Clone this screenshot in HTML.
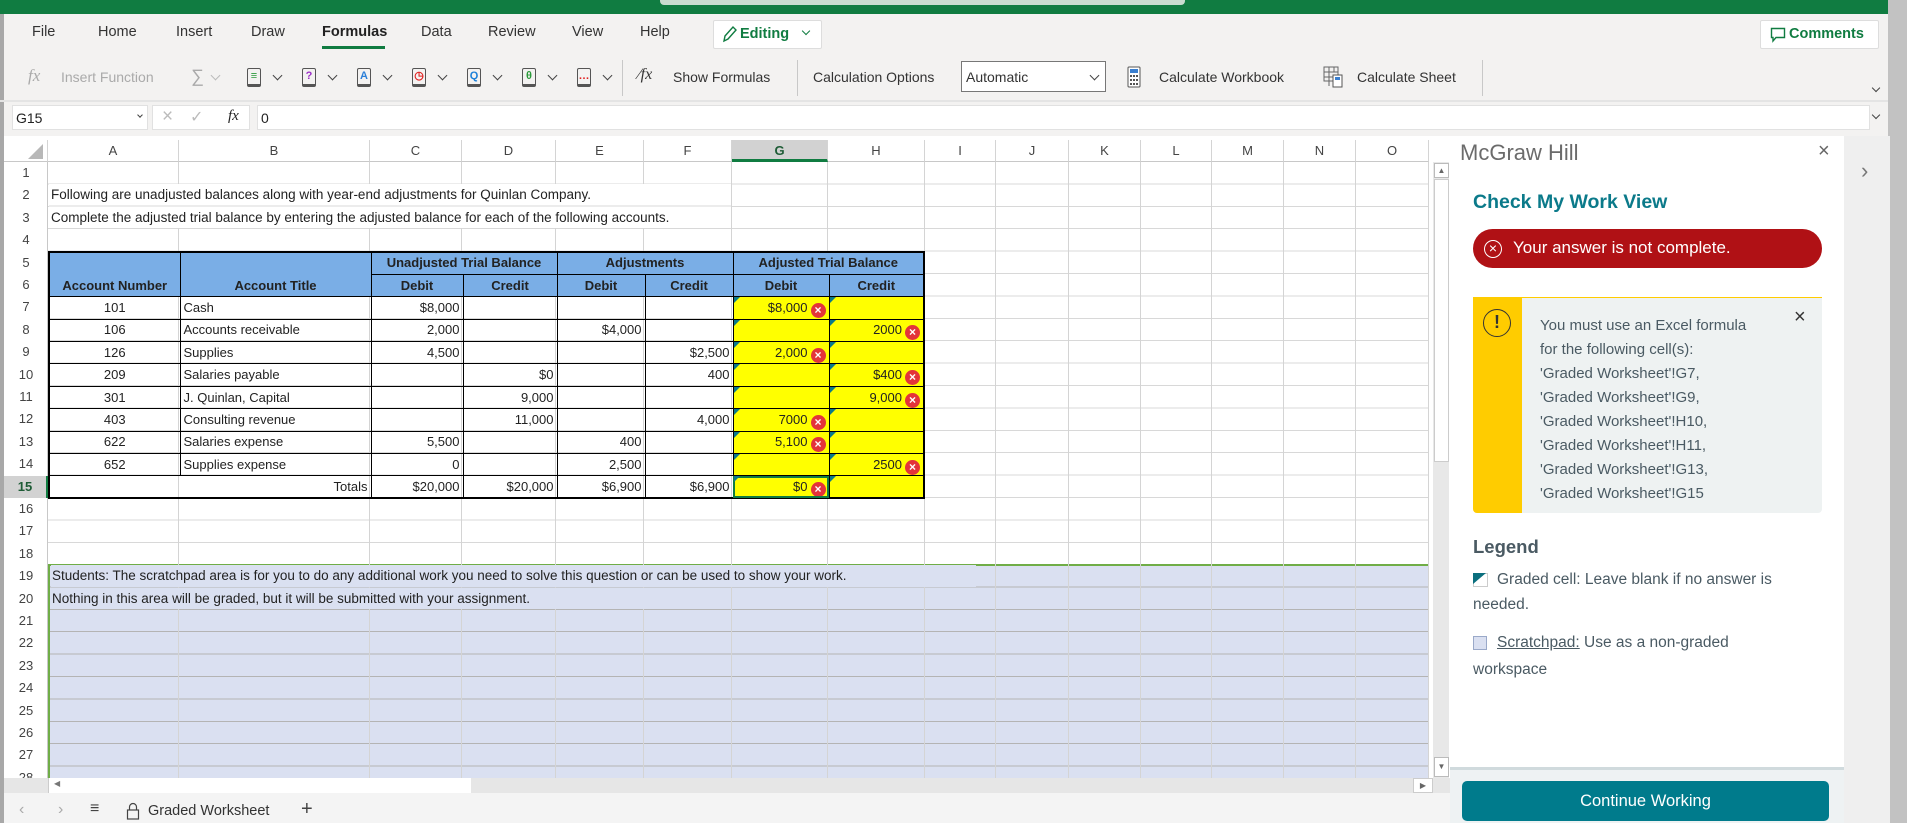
<!DOCTYPE html>
<html><head><meta charset="utf-8"><style>
*{box-sizing:border-box;margin:0;padding:0}
body{width:1907px;height:823px;overflow:hidden;position:relative;background:#fff;font-family:"Liberation Sans",sans-serif;color:#222}
.a{position:absolute}
.tab{position:absolute;top:24px;font-size:14.5px;color:#333}
.rb{position:absolute;top:69px;font-size:14px;color:#333;white-space:nowrap}
.chev{position:absolute;width:7px;height:7px;border-right:1.3px solid #444;border-bottom:1.3px solid #444;transform:rotate(45deg)}
.bk{position:absolute;top:68px;width:14px;height:19px;border:1.3px solid #555;border-radius:2px;border-bottom-width:3px;font-size:11px;text-align:center;line-height:14px;font-weight:bold}
.vl{position:absolute;width:1px;background:#d4d4d4}
.ch{position:absolute;top:140px;height:22px;font-size:13px;color:#444;text-align:center;line-height:22px;border-right:1px solid #d4d4d4;border-bottom:1px solid #c8c8c8;background:#fff}
.rh{position:absolute;left:4px;width:44px;height:22.4px;font-size:13px;color:#444;text-align:center;line-height:22px}
table{border-collapse:collapse;position:absolute;left:48px;top:251px;font-size:13px;table-layout:fixed}
td{height:22.4px;padding:0 3px;border:1px solid #000;white-space:nowrap;position:relative;line-height:20px}
.hd td{background:#7aaee6;font-weight:bold;text-align:center}
.r{text-align:right}.c{text-align:center}
.y{background:#ff0;text-align:right;padding-right:3px}
.y:before{content:"";position:absolute;left:0;top:0;border-top:6px solid #0a7a8a;border-right:6px solid transparent}
.x{display:inline-block;width:15px;height:15px;border-radius:50%;background:#e3343a;color:#fff;font-size:12px;line-height:15px;text-align:center;font-weight:bold;vertical-align:-2px;margin-left:3px}
.pt{position:absolute;left:1540px;font-size:15px;color:#4a5a63;white-space:nowrap}
</style></head><body>
<div class="a" style="left:0;top:0;width:1888px;height:14px;background:#107c41"></div>
<div class="a" style="left:660px;top:0;width:525px;height:5px;background:#c9dccf;border-radius:0 0 4px 4px"></div>
<div class="a" style="left:1888px;top:0;width:19px;height:823px;background:#c2c2c2"></div>
<div class="a" style="left:0;top:14px;width:1888px;height:122px;background:#f3f2f1"></div>
<div class="a" style="left:0;top:14px;width:4px;height:809px;background:#a8a8a8"></div>
<div class="tab" style="left:32px">File</div>
<div class="tab" style="left:98px">Home</div>
<div class="tab" style="left:176px">Insert</div>
<div class="tab" style="left:251px">Draw</div>
<div class="tab" style="left:322px;font-weight:bold;color:#222">Formulas</div>
<div class="a" style="left:322px;top:46px;width:63px;height:3px;background:#107c41"></div>
<div class="tab" style="left:421px">Data</div>
<div class="tab" style="left:488px">Review</div>
<div class="tab" style="left:572px">View</div>
<div class="tab" style="left:640px">Help</div>
<div class="a" style="left:713px;top:20px;width:109px;height:29px;background:#fff;border:1px solid #ddd;border-radius:2px"></div>
<svg class="a" style="left:721px;top:25px" width="16" height="18"><path d="M3 16 L4 11 L12 2 L15 5 L7 14 Z M3 16 L7 14" fill="none" stroke="#107c41" stroke-width="1.4"/></svg>
<div class="a" style="left:740px;top:26px;font-size:14.5px;font-weight:bold;color:#107c41">Editing</div>
<div class="chev" style="left:803px;top:28px;border-color:#107c41;width:6px;height:6px"></div>
<div class="a" style="left:1760px;top:20px;width:119px;height:29px;background:#fff;border:1px solid #ddd;border-radius:2px"></div>
<svg class="a" style="left:1770px;top:27px" width="16" height="16"><path d="M1.5 1.5 H14.5 V10.5 H6 L3 14 V10.5 H1.5 Z" fill="none" stroke="#107c41" stroke-width="1.4"/></svg>
<div class="a" style="left:1789px;top:26px;font-size:14.5px;font-weight:bold;color:#107c41">Comments</div>
<div class="rb" style="left:28px;font-family:'Liberation Serif';font-style:italic;color:#aaa;font-size:17px;top:66px">fx</div>
<div class="rb" style="left:61px;color:#aaa">Insert Function</div>
<div class="rb" style="left:191px;color:#aaa;font-size:18px;top:66px">∑</div>
<div class="chev" style="left:212px;top:72px;border-color:#bbb"></div>
<div class="bk" style="left:247px;color:#2a9a3a">≡</div><div class="chev" style="left:274px;top:72px"></div>
<div class="bk" style="left:302px;color:#9b30c8">?</div><div class="chev" style="left:329px;top:72px"></div>
<div class="bk" style="left:357px;color:#2b7fd8">A</div><div class="chev" style="left:384px;top:72px"></div>
<div class="bk" style="left:412px;color:#e02020">◷</div><div class="chev" style="left:439px;top:72px"></div>
<div class="bk" style="left:467px;color:#1a7fd8">Q</div><div class="chev" style="left:494px;top:72px"></div>
<div class="bk" style="left:522px;color:#2a9a3a">θ</div><div class="chev" style="left:549px;top:72px"></div>
<div class="bk" style="left:577px;color:#e02020">…</div><div class="chev" style="left:604px;top:72px"></div>
<div class="a" style="left:622px;top:60px;width:1px;height:36px;background:#c8c8c8"></div>
<div class="rb" style="left:638px;font-family:'Liberation Serif';font-style:italic;font-size:16px;top:66px">∕fx</div>
<div class="rb" style="left:673px">Show Formulas</div>
<div class="a" style="left:797px;top:60px;width:1px;height:36px;background:#c8c8c8"></div>
<div class="rb" style="left:813px">Calculation Options</div>
<div class="a" style="left:961px;top:61px;width:145px;height:31px;background:#fff;border:1px solid #777"></div>
<div class="rb" style="left:966px">Automatic</div>
<div class="chev" style="left:1091px;top:72px"></div>
<svg class="a" style="left:1127px;top:66px" width="14" height="22"><rect x="1" y="1" width="12" height="20" rx="1" fill="#fff" stroke="#555"/><rect x="3" y="3" width="8" height="4" fill="#3a7fd0"/><g fill="#555"><rect x="3" y="9" width="2" height="2"/><rect x="6" y="9" width="2" height="2"/><rect x="9" y="9" width="2" height="2"/><rect x="3" y="13" width="2" height="2"/><rect x="6" y="13" width="2" height="2"/><rect x="9" y="13" width="2" height="2"/><rect x="3" y="17" width="2" height="2"/><rect x="6" y="17" width="2" height="2"/><rect x="9" y="17" width="2" height="2"/></g></svg>
<div class="rb" style="left:1159px">Calculate Workbook</div>
<svg class="a" style="left:1323px;top:66px" width="20" height="22"><path d="M1 1H15V15H1Z M1 6H15 M1 11H15 M6 1V20 M11 1V6" fill="none" stroke="#666"/><rect x="10" y="9" width="9" height="12" fill="#fff" stroke="#555"/><rect x="12" y="11" width="5" height="3" fill="#3a7fd0"/></svg>
<div class="rb" style="left:1357px">Calculate Sheet</div>
<div class="a" style="left:1482px;top:60px;width:1px;height:36px;background:#c8c8c8"></div>
<div class="chev" style="left:1873px;top:85px;width:6px;height:6px"></div>
<div class="a" style="left:0;top:100px;width:1888px;height:2px;background:#e4e4e4"></div>
<div class="a" style="left:12px;top:105px;width:136px;height:25px;background:#fff;border:1px solid #e1e1e1"></div>
<div class="a" style="left:16px;top:110px;font-size:14px">G15</div>
<div class="chev" style="left:138px;top:113px;width:4px;height:4px"></div>
<div class="a" style="left:152px;top:105px;width:98px;height:25px;background:#fff;border:1px solid #e1e1e1"></div>
<div class="a" style="left:162px;top:106px;font-size:19px;color:#bbb">×</div>
<div class="a" style="left:190px;top:107px;font-size:16px;color:#bbb">✓</div>
<div class="a" style="left:228px;top:108px;font-size:15px;font-family:'Liberation Serif';font-style:italic">fx</div>
<div class="a" style="left:257px;top:105px;width:1613px;height:25px;background:#fff;border:1px solid #e1e1e1"></div>
<div class="a" style="left:261px;top:110px;font-size:14px">0</div>
<div class="chev" style="left:1873px;top:112px;width:6px;height:6px"></div>
<div class="a" style="left:4px;top:136px;width:1446px;height:642px;background:#fff"></div>
<div class="a" style="left:48px;top:162px;width:1381px;height:616px;background:repeating-linear-gradient(to bottom,#fff 0,#fff 21.4px,#d8d8d8 21.4px,#d8d8d8 22.4px)"></div>
<div class="a" style="left:48px;top:565px;width:1381px;height:213px;background:repeating-linear-gradient(to bottom,#dae0f1 0,#dae0f1 21.4px,#b4b4b4 21.4px,#b4b4b4 22.4px)"></div>
<div class="a" style="left:48px;top:564px;width:1381px;height:2px;background:#70ad47"></div>
<div class="a" style="left:48px;top:565px;width:2px;height:213px;background:#70ad47"></div>
<div class="vl" style="left:178px;top:162px;height:616px"></div>
<div class="vl" style="left:369px;top:162px;height:616px"></div>
<div class="vl" style="left:461px;top:162px;height:616px"></div>
<div class="vl" style="left:555px;top:162px;height:616px"></div>
<div class="vl" style="left:643px;top:162px;height:616px"></div>
<div class="vl" style="left:731px;top:162px;height:616px"></div>
<div class="vl" style="left:827px;top:162px;height:616px"></div>
<div class="vl" style="left:924px;top:162px;height:616px"></div>
<div class="vl" style="left:995px;top:162px;height:616px"></div>
<div class="vl" style="left:1068px;top:162px;height:616px"></div>
<div class="vl" style="left:1140px;top:162px;height:616px"></div>
<div class="vl" style="left:1211px;top:162px;height:616px"></div>
<div class="vl" style="left:1283px;top:162px;height:616px"></div>
<div class="vl" style="left:1355px;top:162px;height:616px"></div>
<div class="vl" style="left:1428px;top:162px;height:616px"></div>
<div class="a" style="left:49px;top:184.4px;width:682px;height:44px;background:repeating-linear-gradient(to bottom,#fff 0,#fff 21.4px,#d8d8d8 21.4px,#d8d8d8 22.4px)"></div>
<div class="a" style="left:51px;top:587.6px;width:600px;height:21.4px;background:#dae0f1"></div>
<div class="a" style="left:51px;top:565.2px;width:925px;height:21.4px;background:#dae0f1"></div>
<div class="a" style="left:51px;top:187px;font-size:13.5px;white-space:nowrap">Following are unadjusted balances along with year-end adjustments for Quinlan Company.</div>
<div class="a" style="left:51px;top:209.5px;font-size:13.5px;white-space:nowrap">Complete the adjusted trial balance by entering the adjusted balance for each of the following accounts.</div>
<div class="a" style="left:52px;top:568px;font-size:13.5px;white-space:nowrap">Students: The scratchpad area is for you to do any additional work you need to solve this question or can be used to show your work.</div>
<div class="a" style="left:52px;top:590.5px;font-size:13.5px;white-space:nowrap">Nothing in this area will be graded, but it will be submitted with your assignment.</div>
<div class="a" style="left:4px;top:140px;width:44px;height:22px;background:#fff;border-right:1px solid #d4d4d4;border-bottom:1px solid #c8c8c8"></div>
<div class="a" style="left:28px;top:144px;border-bottom:15px solid #b8b8b8;border-left:15px solid transparent"></div>
<div class="ch" style="left:48px;width:131px">A</div>
<div class="ch" style="left:179px;width:191px">B</div>
<div class="ch" style="left:370px;width:92px">C</div>
<div class="ch" style="left:462px;width:94px">D</div>
<div class="ch" style="left:556px;width:88px">E</div>
<div class="ch" style="left:644px;width:88px">F</div>
<div class="ch" style="left:732px;width:96px;background:#d2d2d2;font-weight:bold;color:#1e5c36;border-bottom:3px solid #107c41">G</div>
<div class="ch" style="left:828px;width:97px">H</div>
<div class="ch" style="left:925px;width:71px">I</div>
<div class="ch" style="left:996px;width:73px">J</div>
<div class="ch" style="left:1069px;width:72px">K</div>
<div class="ch" style="left:1141px;width:71px">L</div>
<div class="ch" style="left:1212px;width:72px">M</div>
<div class="ch" style="left:1284px;width:72px">N</div>
<div class="ch" style="left:1356px;width:73px">O</div>
<div class="a" style="left:47px;top:162px;width:1px;height:616px;background:#c8c8c8"></div>
<div class="rh" style="top:162px">1</div><div class="rh" style="top:184.4px">2</div><div class="rh" style="top:206.8px">3</div><div class="rh" style="top:229.2px">4</div><div class="rh" style="top:251.6px">5</div><div class="rh" style="top:274px">6</div><div class="rh" style="top:296.4px">7</div><div class="rh" style="top:318.8px">8</div><div class="rh" style="top:341.2px">9</div><div class="rh" style="top:363.6px">10</div><div class="rh" style="top:386px">11</div><div class="rh" style="top:408.4px">12</div><div class="rh" style="top:430.8px">13</div><div class="rh" style="top:453.2px">14</div>
<div class="rh" style="top:475.6px;background:#d2d2d2;font-weight:bold;color:#1e5c36;border-right:2px solid #107c41">15</div>
<div class="rh" style="top:498px">16</div><div class="rh" style="top:520.4px">17</div><div class="rh" style="top:542.8px">18</div><div class="rh" style="top:565.2px">19</div><div class="rh" style="top:587.6px">20</div><div class="rh" style="top:610px">21</div><div class="rh" style="top:632.4px">22</div><div class="rh" style="top:654.8px">23</div><div class="rh" style="top:677.2px">24</div><div class="rh" style="top:699.6px">25</div><div class="rh" style="top:722px">26</div><div class="rh" style="top:744.4px">27</div><div class="rh" style="top:766.8px;height:11px;overflow:hidden">28</div>
<table style="border:2px solid #000">
<colgroup><col style="width:131px"><col style="width:191px"><col style="width:92px"><col style="width:94px"><col style="width:88px"><col style="width:88px"><col style="width:96px"><col style="width:95px"></colgroup>
<tr class="hd"><td rowspan="2" style="vertical-align:bottom">Account Number</td><td rowspan="2" style="vertical-align:bottom">Account Title</td><td colspan="2">Unadjusted Trial Balance</td><td colspan="2">Adjustments</td><td colspan="2">Adjusted Trial Balance</td></tr>
<tr class="hd"><td>Debit</td><td>Credit</td><td>Debit</td><td>Credit</td><td>Debit</td><td>Credit</td></tr>
<tr><td class="c">101</td><td>Cash</td><td class="r">$8,000</td><td></td><td></td><td></td><td class="y">$8,000<span class="x">×</span></td><td class="y"></td></tr>
<tr><td class="c">106</td><td>Accounts receivable</td><td class="r">2,000</td><td></td><td class="r">$4,000</td><td></td><td class="y"></td><td class="y">2000<span class="x">×</span></td></tr>
<tr><td class="c">126</td><td>Supplies</td><td class="r">4,500</td><td></td><td></td><td class="r">$2,500</td><td class="y">2,000<span class="x">×</span></td><td class="y"></td></tr>
<tr><td class="c">209</td><td>Salaries payable</td><td></td><td class="r">$0</td><td></td><td class="r">400</td><td class="y"></td><td class="y">$400<span class="x">×</span></td></tr>
<tr><td class="c">301</td><td>J. Quinlan, Capital</td><td></td><td class="r">9,000</td><td></td><td></td><td class="y"></td><td class="y">9,000<span class="x">×</span></td></tr>
<tr><td class="c">403</td><td>Consulting revenue</td><td></td><td class="r">11,000</td><td></td><td class="r">4,000</td><td class="y">7000<span class="x">×</span></td><td class="y"></td></tr>
<tr><td class="c">622</td><td>Salaries expense</td><td class="r">5,500</td><td></td><td class="r">400</td><td></td><td class="y">5,100<span class="x">×</span></td><td class="y"></td></tr>
<tr><td class="c">652</td><td>Supplies expense</td><td class="r">0</td><td></td><td class="r">2,500</td><td></td><td class="y"></td><td class="y">2500<span class="x">×</span></td></tr>
<tr><td colspan="2" class="r">Totals</td><td class="r">$20,000</td><td class="r">$20,000</td><td class="r">$6,900</td><td class="r">$6,900</td><td class="y" style="outline:2px solid #107c41;outline-offset:-2px">$0<span class="x">×</span></td><td class="y"></td></tr>
</table>
<div class="a" style="left:1429px;top:140px;width:21px;height:22px;background:#fff"></div>
<div class="a" style="left:1433px;top:162px;width:16px;height:616px;background:#e8e8e8"></div>
<div class="a" style="left:1434px;top:163px;width:15px;height:15px;background:#fff;border:1px solid #bbb;font-size:8px;text-align:center;color:#666;line-height:13px">▲</div>
<div class="a" style="left:1434px;top:179px;width:15px;height:283px;background:#fff;border:1px solid #ccc"></div>
<div class="a" style="left:1434px;top:757px;width:15px;height:20px;background:#fff;border:1px solid #bbb;font-size:8px;text-align:center;color:#666;line-height:18px">▼</div>
<div class="a" style="left:4px;top:778px;width:1446px;height:15px;background:#e6e6e6"></div>
<div class="a" style="left:48px;top:778px;width:423px;height:15px;background:#fff;border-left:1px solid #ccc"></div>
<div class="a" style="left:54px;top:779px;font-size:8px;color:#777">◀</div>
<div class="a" style="left:1413px;top:778px;width:20px;height:15px;background:#fff;border:1px solid #ccc;font-size:8px;color:#666;text-align:center;line-height:13px">▶</div>
<div class="a" style="left:4px;top:793px;width:1446px;height:30px;background:#f4f4f4"></div>
<div class="a" style="left:19px;top:801px;font-size:16px;color:#aaa">‹</div>
<div class="a" style="left:58px;top:801px;font-size:16px;color:#aaa">›</div>
<div class="a" style="left:90px;top:800px;font-size:16px;color:#444">≡</div>
<svg class="a" style="left:126px;top:802px" width="14" height="18"><path d="M3.5 8 V5 A3.5 3.5 0 0 1 10.5 5 V8" fill="none" stroke="#444" stroke-width="1.2"/><rect x="1.5" y="8" width="11" height="9" fill="none" stroke="#444" stroke-width="1.2"/></svg>
<div class="a" style="left:148px;top:803px;font-size:14.5px;color:#333">Graded Worksheet</div>
<div class="a" style="left:301px;top:798px;font-size:20px;color:#444;font-weight:300">+</div>
<div class="a" style="left:1450px;top:136px;width:394px;height:687px;background:#fff"></div>
<div class="a" style="left:1844px;top:136px;width:46px;height:687px;background:#efefef"></div>
<div class="a" style="left:1861px;top:158px;font-size:22px;color:#777">›</div>
<div class="a" style="left:1460px;top:140px;font-size:22px;color:#6b6b6b;font-weight:300">McGraw Hill</div>
<div class="a" style="left:1818px;top:140px;font-size:20px;color:#666">×</div>
<div class="a" style="left:1473px;top:191px;font-size:19.5px;font-weight:bold;color:#0b7a8a">Check My Work View</div>
<div class="a" style="left:1473px;top:229px;width:349px;height:39px;background:#b01115;border-radius:20px"></div>
<div class="a" style="left:1484px;top:240px;width:18px;height:18px;border:1.5px solid #fff;border-radius:50%;color:#fff;font-size:14px;line-height:14px;text-align:center">×</div>
<div class="a" style="left:1513px;top:238px;font-size:17px;color:#fff">Your answer is not complete.</div>
<div class="a" style="left:1473px;top:297px;width:349px;height:216px;background:#eef2f2;border-top:1px solid #ffcc00;border-radius:0 0 4px 4px"></div>
<div class="a" style="left:1473px;top:297px;width:49px;height:216px;background:#ffcc00;border-radius:0 0 0 4px"></div>
<div class="a" style="left:1483px;top:309px;width:28px;height:28px;border:1.7px solid #333;border-radius:50%;text-align:center;font-size:18px;font-weight:bold;line-height:24px;color:#333">!</div>
<div class="a" style="left:1794px;top:306px;font-size:20px;color:#333">×</div>
<div class="pt" style="top:317px">You must use an Excel formula</div>
<div class="pt" style="top:341px">for the following cell(s):</div>
<div class="pt" style="top:365px">'Graded Worksheet'!G7,</div>
<div class="pt" style="top:389px">'Graded Worksheet'!G9,</div>
<div class="pt" style="top:413px">'Graded Worksheet'!H10,</div>
<div class="pt" style="top:437px">'Graded Worksheet'!H11,</div>
<div class="pt" style="top:461px">'Graded Worksheet'!G13,</div>
<div class="pt" style="top:485px">'Graded Worksheet'!G15</div>
<div class="a" style="left:1473px;top:536px;font-size:18.5px;font-weight:bold;color:#4a5a63">Legend</div>
<div class="a" style="left:1473px;top:573px;width:15px;height:14px;border:1px solid #ccc;background:#fff"></div>
<div class="a" style="left:1473px;top:573px;border-top:11px solid #0b6f7e;border-right:13px solid transparent"></div>
<div class="a" style="left:1497px;top:571px;font-size:15.5px;color:#4a5a63;white-space:nowrap">Graded cell: Leave blank if no answer is</div>
<div class="a" style="left:1473px;top:596px;font-size:15.5px;color:#4a5a63">needed.</div>
<div class="a" style="left:1473px;top:636px;width:14px;height:14px;border:1px solid #9aa9c9;background:#dae0f1"></div>
<div class="a" style="left:1497px;top:634px;font-size:15.5px;color:#4a5a63;white-space:nowrap"><u>Scratchpad:</u> Use as a non-graded</div>
<div class="a" style="left:1473px;top:661px;font-size:15.5px;color:#4a5a63">workspace</div>
<div class="a" style="left:1450px;top:767px;width:394px;height:3px;background:#d0dadd"></div>
<div class="a" style="left:1450px;top:770px;width:394px;height:53px;background:#eef2f3"></div>
<div class="a" style="left:1462px;top:781px;width:367px;height:40px;background:#007b8c;border-radius:5px;color:#fff;font-size:16.5px;text-align:center;line-height:40px">Continue Working</div>
</body></html>
